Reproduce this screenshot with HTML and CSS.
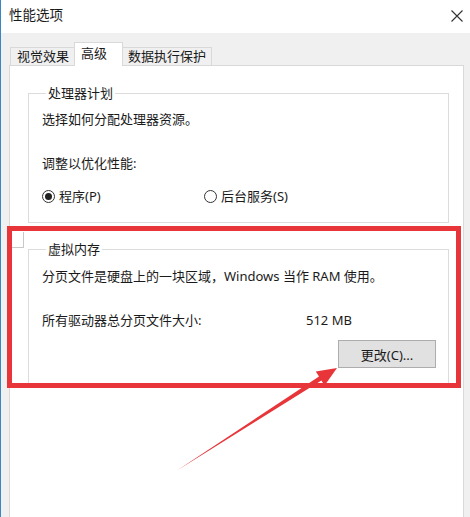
FILE: index.html
```html
<!DOCTYPE html>
<html lang="zh-CN">
<head>
<meta charset="utf-8">
<title>性能选项</title>
<link rel="stylesheet" href="styles.css">
</head>
<body>
<div class="window">
  <div class="titlebar">
    <span class="title">性能选项</span>
    <svg class="close" width="12" height="12" viewBox="0 0 12 12"><path d="M0.5 0.5 L11.5 11.5 M11.5 0.5 L0.5 11.5" stroke="#333" stroke-width="1.1" fill="none"/></svg>
  </div>
  <div class="body">
    <div class="tabs">
      <div class="tab">视觉效果</div>
      <div class="tab active">高级</div>
      <div class="tab">数据执行保护</div>
    </div>
    <div class="panel">
      <fieldset class="group first">
        <legend>处理器计划</legend>
        <p class="line">选择如何分配处理器资源。</p>
        <p class="line gap">调整以优化性能:</p>
        <div class="radios">
          <label class="radio r1"><span class="dot checked"></span>程序(P)</label>
          <label class="radio"><span class="dot"></span>后台服务(S)</label>
        </div>
      </fieldset>
      <fieldset class="group second">
        <legend>虚拟内存</legend>
        <p class="line">分页文件是硬盘上的一块区域，Windows 当作 RAM 使用。</p>
        <div class="sizerow">
          <span>所有驱动器总分页文件大小:</span>
          <span>512 MB</span>
        </div>
        <div class="btnrow"><button class="btn">更改(C)...</button></div>
      </fieldset>
    </div>
  </div>
  <div class="redbox"><span class="corner"></span></div>
  <svg class="arrow" width="470" height="517" viewBox="0 0 470 517">
    <polygon points="337,368 315.8,371.6 319,376.6 177,470.5 321.4,380.6 324.6,385.6" fill="#e8353a"/>
  </svg>
</div>
</body>
</html>
```
FILE: styles.css
```css
html, body {
  margin: 0;
  padding: 0;
}
body {
  width: 470px;
  height: 517px;
  overflow: hidden;
  font-family: "Noto Sans", "Noto Sans CJK SC", sans-serif;
  font-size: 13px;
  color: #1a1a1a;
}
.window {
  position: relative;
  width: 469px;
  height: 517px;
  border-left: 1px solid #3a86c3;
  background: #f0f0f0;
  overflow: hidden;
}
.titlebar {
  height: 31px;
  background: #fff;
  display: flex;
  align-items: center;
  justify-content: space-between;
  padding: 0 7px 2px 8px;
}
.title {
  font-size: 13.5px;
  line-height: 17px;
}
.close {
  margin-top: 0;
}
.body {
  padding: 9px 6px 0 8px;
}
.tabs {
  display: flex;
  align-items: flex-end;
  height: 23px;
  position: relative;
  z-index: 1;
}
.tab {
  height: 18px;
  line-height: 17px;
  border: 1px solid #d9d9d9;
  border-bottom: none;
  background: #f0f0f0;
  padding: 0 5px 0 6px;
  margin-right: -1px;
  box-sizing: border-box;
  font-size: 13px;
}
.tab:first-child {
  margin-left: 1px;
}
.tab.active {
  height: 24px;
  margin-bottom: -1px;
  background: #fff;
  padding: 2px 15px 0 6px;
  position: relative;
  z-index: 2;
}
.tab:last-child {
  padding: 0 5px 0 5px;
}
.panel {
  background: #fff;
  border: 1px solid #d9d9d9;
  height: 470px;
  padding: 19px 14px 0 18px;
}
.group {
  margin: 0;
  border: 1px solid #dcdcdc;
  padding: 9px 12px 17px 13px;
  min-width: 0;
}
.group legend {
  padding: 0 2px;
  margin-left: 4px;
  line-height: 17px;
}
.group.second {
  margin-top: 18px;
  padding-top: 10px;
  padding-bottom: 16px;
}
.line {
  margin: 0;
  line-height: 17px;
}
.line.gap {
  margin-top: 27px;
}
.radios {
  display: flex;
  margin-top: 16px;
  line-height: 17px;
}
.radio {
  display: flex;
  align-items: center;
}
.radio.r1 {
  width: 162px;
}
.dot {
  width: 13px;
  height: 13px;
  border: 1px solid #333;
  border-radius: 50%;
  box-sizing: border-box;
  margin-right: 4px;
  display: flex;
  align-items: center;
  justify-content: center;
}
.dot.checked::after {
  content: "";
  width: 7px;
  height: 7px;
  border-radius: 50%;
  background: #222;
}
.sizerow {
  display: grid;
  grid-template-columns: 264px auto;
  margin-top: 27px;
  line-height: 17px;
}
.btnrow {
  display: flex;
  justify-content: flex-end;
  margin-top: 11px;
}
.btn {
  width: 98px;
  height: 28px;
  background: #e1e1e1;
  border: 1px solid #adadad;
  font-family: inherit;
  font-size: 13px;
  color: #1a1a1a;
  padding: 0;
}
.redbox {
  position: absolute;
  left: 6px;
  top: 226px;
  width: 454px;
  height: 162px;
  border: 5px solid #e8353a;
  box-sizing: border-box;
}
.corner {
  position: absolute;
  left: 0;
  top: 1px;
  width: 11px;
  height: 15px;
  background: #fff;
  border-right: 1px solid #c8c8c8;
  border-bottom: 1px solid #c8c8c8;
}
.arrow {
  position: absolute;
  left: -1px;
  top: 0;
  pointer-events: none;
}
```
